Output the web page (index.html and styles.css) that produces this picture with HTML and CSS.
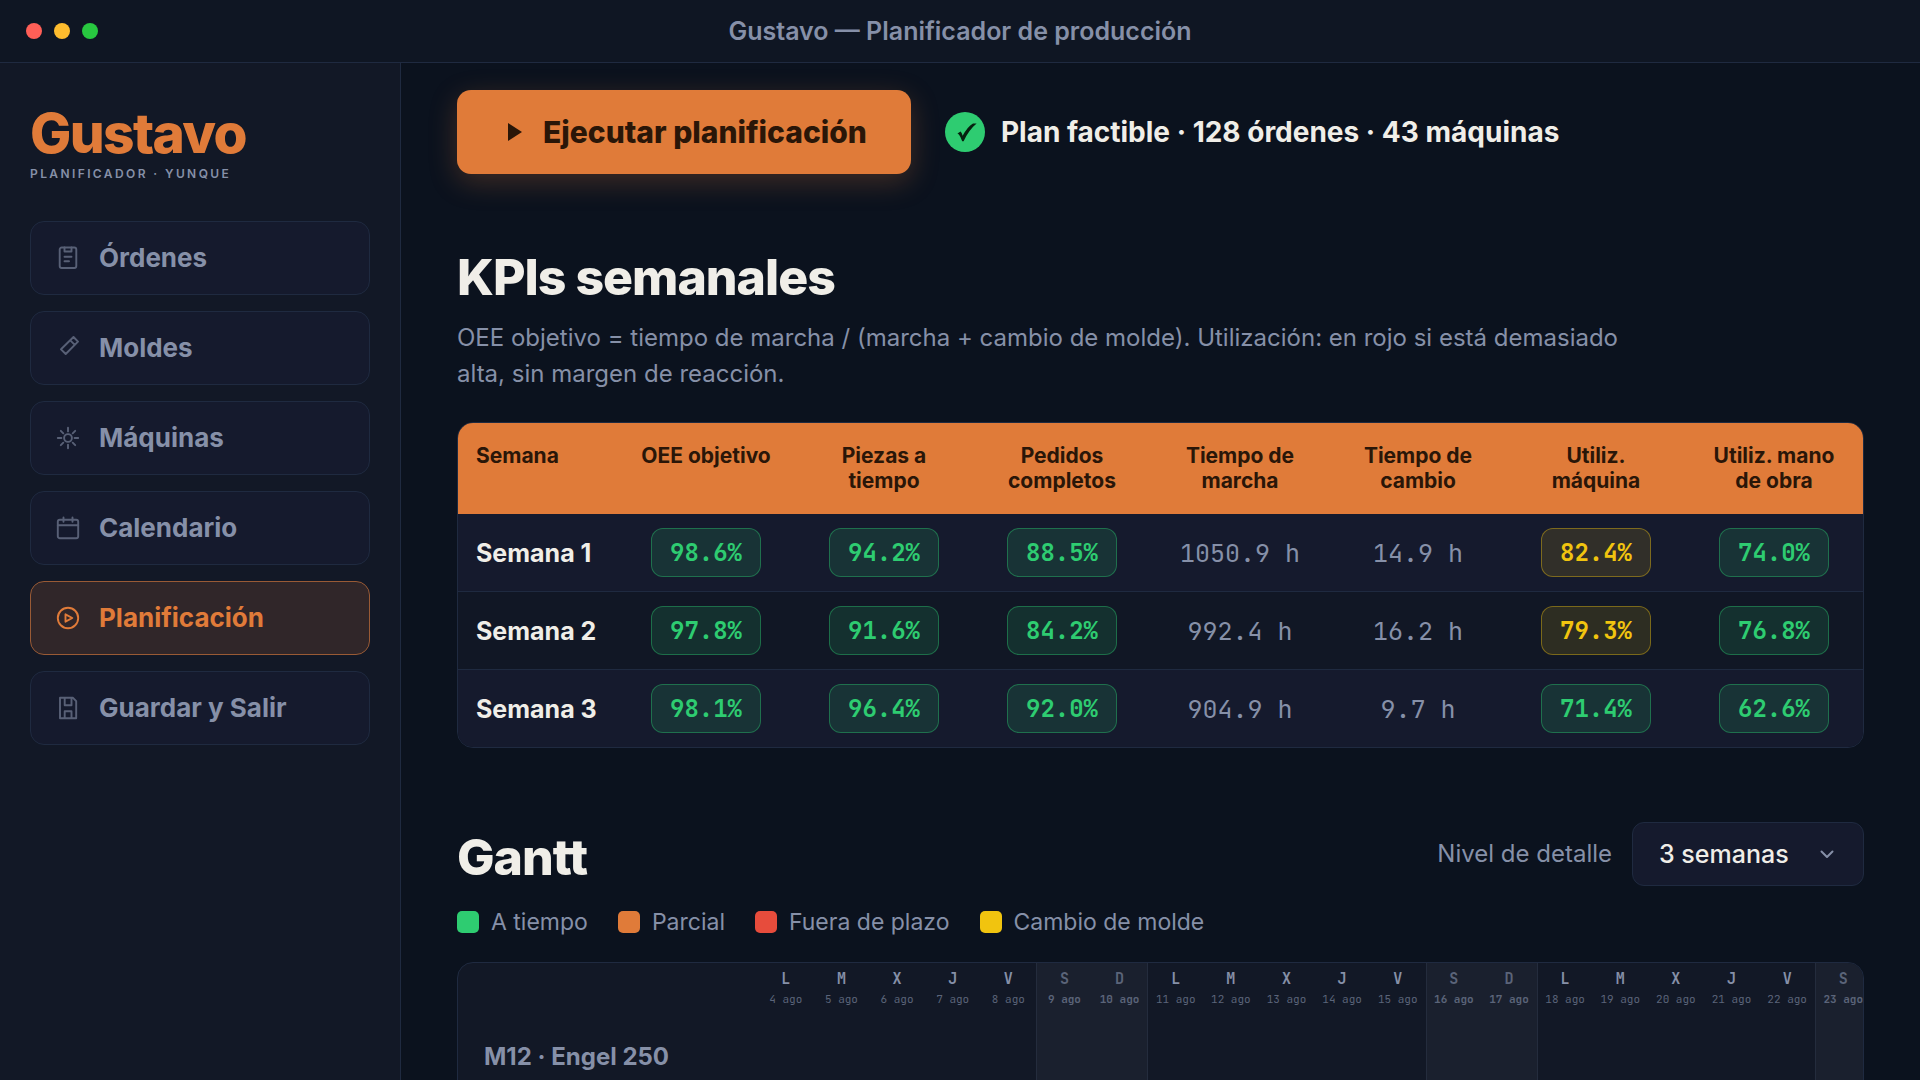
FILE: index.html
```html
<!DOCTYPE html>
<html lang="es">
<head>
  <meta charset="UTF-8">
  <meta name="viewport" content="width=device-width, initial-scale=1">
  <title>Gustavo — Planificador de producción</title>
  <link rel="stylesheet" href="styles.css">
</head>
<body>
  <header class="titlebar">
    <div class="dots">
      <span class="dot dot-close"></span>
      <span class="dot dot-min"></span>
      <span class="dot dot-max"></span>
    </div>
    <div class="window-title">Gustavo — Planificador de producción</div>
  </header>

  <div class="app">
    <aside class="sidebar">
      <div class="logo">Gustavo</div>
      <div class="tagline">PLANIFICADOR · YUNQUE</div>

      <nav class="menu">
        <a class="menu-item" href="#ordenes">
          <svg class="icon" viewBox="0 0 24 24"><rect x="3.7" y="1.5" width="16.6" height="20.5" rx="2"/><path d="M8.5 1.5v4h7v-4M8.5 10.8h7M8.5 15.3h4.5"/></svg>
          Órdenes
        </a>
        <a class="menu-item" href="#moldes">
          <svg class="icon" viewBox="0 0 24 24"><path d="M17.5 1 22 5.7 9.7 18 5 13.3zM14.3 4.3l4.5 4.5"/></svg>
          Moldes
        </a>
        <a class="menu-item" href="#maquinas">
          <svg class="icon" viewBox="0 0 24 24"><circle cx="12" cy="12" r="3.9"/><path d="M12 1.8v3.6M12 18.6v3.6M1.8 12h3.6M18.6 12h3.6M4.8 4.8l2.5 2.5M16.7 16.7l2.5 2.5M19.2 4.8l-2.5 2.5M7.3 16.7l-2.5 2.5"/></svg>
          Máquinas
        </a>
        <a class="menu-item" href="#calendario">
          <svg class="icon" viewBox="0 0 24 24"><rect x="1.8" y="3.7" width="20.4" height="18.5" rx="2"/><path d="M1.8 9.2h20.4M7.5 1.5v4.3M16.5 1.5v4.3"/></svg>
          Calendario
        </a>
        <a class="menu-item active" href="#planificacion">
          <svg class="icon" viewBox="0 0 24 24"><circle cx="12" cy="12" r="10.2"/><path d="M9.5 8.3v7.4l6.8-3.7z"/></svg>
          Planificación
        </a>
        <a class="menu-item" href="#guardar">
          <svg class="icon" viewBox="0 0 24 24"><path d="M4 1.8h13l3.2 3.4v17H4zM8.7 1.8v7.4h6.8V1.8M8.7 22v-6.8h6.8V22"/></svg>
          Guardar y Salir
        </a>
      </nav>
    </aside>

    <main class="content">
      <div class="run-bar">
        <button class="run-button" type="button">
          <svg class="play" viewBox="0 0 28 28"><path d="M7 5v18l14-9z"/></svg>
          Ejecutar planificación
        </button>
        <div class="status">
          <svg class="check" viewBox="0 0 40 40"><circle cx="20" cy="20" r="20"/><path d="M12.4 21.6 15.6 19.6Q17 21.2 17.6 23.8 22.4 14.6 28 11.4L31.6 11.4Q23.6 18 18.6 29.2L17.2 29.2Q15.4 24.4 14.2 23 13.4 22 12.4 21.6z"/></svg>
          Plan factible · 128 órdenes · 43 máquinas
        </div>
      </div>

      <section class="section">
        <h2>KPIs semanales</h2>
        <p class="description">OEE objetivo = tiempo de marcha / (marcha + cambio de molde). Utilización: en rojo si está demasiado alta, sin margen de reacción.</p>

        <div class="table-box">
          <table class="kpis">
            <thead>
              <tr>
                <th>Semana</th>
                <th>OEE objetivo</th>
                <th>Piezas a tiempo</th>
                <th>Pedidos completos</th>
                <th>Tiempo de marcha</th>
                <th>Tiempo de cambio</th>
                <th>Utiliz. máquina</th>
                <th>Utiliz. mano de obra</th>
              </tr>
            </thead>
            <tbody>
              <tr>
                <td>Semana 1</td>
                <td><span class="pill good">98.6%</span></td>
                <td><span class="pill good">94.2%</span></td>
                <td><span class="pill good">88.5%</span></td>
                <td class="hours">1050.9 h</td>
                <td class="hours">14.9 h</td>
                <td><span class="pill warn">82.4%</span></td>
                <td><span class="pill good">74.0%</span></td>
              </tr>
              <tr>
                <td>Semana 2</td>
                <td><span class="pill good">97.8%</span></td>
                <td><span class="pill good">91.6%</span></td>
                <td><span class="pill good">84.2%</span></td>
                <td class="hours">992.4 h</td>
                <td class="hours">16.2 h</td>
                <td><span class="pill warn">79.3%</span></td>
                <td><span class="pill good">76.8%</span></td>
              </tr>
              <tr>
                <td>Semana 3</td>
                <td><span class="pill good">98.1%</span></td>
                <td><span class="pill good">96.4%</span></td>
                <td><span class="pill good">92.0%</span></td>
                <td class="hours">904.9 h</td>
                <td class="hours">9.7 h</td>
                <td><span class="pill good">71.4%</span></td>
                <td><span class="pill good">62.6%</span></td>
              </tr>
            </tbody>
          </table>
        </div>
      </section>

      <section class="section">
        <div class="section-head">
          <h2>Gantt</h2>
          <div class="detail">
            <label for="detail">Nivel de detalle</label>
            <div class="select-box">
              <select id="detail">
                <option>3 semanas</option>
              </select>
              <svg class="chevron" viewBox="0 0 16 16"><path d="M2.5 5.5 8 11l5.5-5.5"/></svg>
            </div>
          </div>
        </div>

        <div class="legend">
          <span class="legend-item"><i class="swatch on-time"></i>A tiempo</span>
          <span class="legend-item"><i class="swatch partial"></i>Parcial</span>
          <span class="legend-item"><i class="swatch late"></i>Fuera de plazo</span>
          <span class="legend-item"><i class="swatch change"></i>Cambio de molde</span>
        </div>

        <div class="gantt">
          <div class="gantt-grid">
            <div class="machine">M12 · Engel 250</div>
            <div class="day"><b>L</b><span>4 ago</span></div>
            <div class="day"><b>M</b><span>5 ago</span></div>
            <div class="day"><b>X</b><span>6 ago</span></div>
            <div class="day"><b>J</b><span>7 ago</span></div>
            <div class="day"><b>V</b><span>8 ago</span></div>
            <div class="day weekend saturday"><b>S</b><span>9 ago</span></div>
            <div class="day weekend sunday"><b>D</b><span>10 ago</span></div>
            <div class="day"><b>L</b><span>11 ago</span></div>
            <div class="day"><b>M</b><span>12 ago</span></div>
            <div class="day"><b>X</b><span>13 ago</span></div>
            <div class="day"><b>J</b><span>14 ago</span></div>
            <div class="day"><b>V</b><span>15 ago</span></div>
            <div class="day weekend saturday"><b>S</b><span>16 ago</span></div>
            <div class="day weekend sunday"><b>D</b><span>17 ago</span></div>
            <div class="day"><b>L</b><span>18 ago</span></div>
            <div class="day"><b>M</b><span>19 ago</span></div>
            <div class="day"><b>X</b><span>20 ago</span></div>
            <div class="day"><b>J</b><span>21 ago</span></div>
            <div class="day"><b>V</b><span>22 ago</span></div>
            <div class="day weekend saturday"><b>S</b><span>23 ago</span></div>
          </div>
        </div>
      </section>
    </main>
  </div>
</body>
</html>
```
FILE: styles.css
```css
:root {
  --bg: #0b121e;
  --bar: #0f1623;
  --panel: #121826;
  --card: #151a2d;
  --line: #1f2a40;
  --text: #f0eee8;
  --muted: #8690a8;
  --orange: #e07b39;
  --green: #2ecc71;
  --yellow: #f1c40f;
  --red: #e74c3c;
  --dark: #2a1608;
  --mono: "JetBrains Mono", "DejaVu Sans Mono", monospace;
}

* {
  box-sizing: border-box;
}

body {
  margin: 0;
  height: 100vh;
  display: flex;
  flex-direction: column;
  overflow: hidden;
  background: var(--bg);
  color: var(--text);
  font-family: Inter, sans-serif;
  font-size: 24px;
  line-height: 36px;
}

/* Title bar */
.titlebar {
  display: grid;
  grid-template-columns: 1fr auto 1fr;
  align-items: center;
  flex: none;
  height: 63px;
  padding: 0 26px;
  background: var(--bar);
  border-bottom: 1px solid var(--line);
}

.dots {
  display: flex;
  gap: 12px;
}

.dot {
  width: 16px;
  height: 16px;
  border-radius: 50%;
}

.dot-close { background: #ff5f57; }
.dot-min { background: #febc2e; }
.dot-max { background: #28c840; }

.window-title {
  color: var(--muted);
  font-size: 25px;
  font-weight: 600;
}

.app {
  display: flex;
  flex: 1;
  min-height: 0;
}

/* Sidebar */
.sidebar {
  flex: none;
  width: 401px;
  padding: 40px 30px;
  background: var(--panel);
  border-right: 1px solid var(--line);
}

.logo {
  color: var(--orange);
  font-size: 55px;
  font-weight: 800;
  line-height: 60px;
  letter-spacing: -0.03em;
}

.tagline {
  margin-top: 2px;
  color: var(--muted);
  font-size: 12px;
  font-weight: 600;
  line-height: 18px;
  letter-spacing: 0.2em;
}

.menu {
  display: flex;
  flex-direction: column;
  gap: 16px;
  margin-top: 38px;
}

.menu-item {
  display: flex;
  align-items: center;
  gap: 19px;
  height: 74px;
  padding: 0 25px;
  border: 1px solid var(--line);
  border-radius: 14px;
  background: var(--card);
  color: var(--muted);
  font-size: 26px;
  font-weight: 700;
  text-decoration: none;
}

.menu-item.active {
  background: #302629;
  border-color: #995a35;
  color: var(--orange);
}

.icon {
  width: 24px;
  height: 24px;
  fill: none;
  stroke: currentColor;
  stroke-width: 1.9;
  stroke-linecap: round;
  stroke-linejoin: round;
  opacity: 0.6;
}

.active .icon {
  opacity: 1;
}

/* Content */
.content {
  flex: 1;
  min-width: 0;
  padding: 27px 56px 0;
  overflow: hidden;
}

.run-bar {
  display: flex;
  align-items: center;
  gap: 34px;
}

.run-button {
  display: flex;
  align-items: center;
  gap: 14px;
  height: 84px;
  padding: 0 44px;
  border: 0;
  border-radius: 14px;
  background: var(--orange);
  box-shadow: 0 8px 28px rgba(224, 123, 57, 0.25);
  color: var(--dark);
  font-family: inherit;
  font-size: 30px;
  font-weight: 800;
  cursor: pointer;
}

.play {
  width: 28px;
  height: 28px;
  fill: currentColor;
}

.status {
  display: flex;
  align-items: center;
  gap: 16px;
  font-size: 28px;
  font-weight: 700;
}

.check {
  width: 40px;
  height: 40px;
  fill: #06210f;
}

.check circle {
  fill: var(--green);
}

.section {
  margin-top: 74px;
}

h2 {
  margin: 0;
  font-size: 50px;
  font-weight: 800;
  line-height: 58px;
  letter-spacing: -0.02em;
}

.description {
  max-width: 1200px;
  margin: 14px 0 30px;
  color: var(--muted);
}

/* KPI table */
.table-box {
  border: 1px solid var(--line);
  border-radius: 16px;
  overflow: hidden;
}

.kpis {
  width: 100%;
  table-layout: fixed;
  border-collapse: separate;
  border-spacing: 0;
  text-align: center;
}

.kpis th {
  padding: 20px 16px 21px;
  background: var(--orange);
  color: var(--dark);
  font-size: 21px;
  font-weight: 700;
  line-height: 25px;
  vertical-align: top;
}

.kpis td {
  height: 78px;
  padding: 0;
  border-bottom: 1px solid var(--line);
  background: var(--card);
}

.kpis tr:nth-child(even) td {
  background: #111725;
}

.kpis tr:last-child td {
  height: 77px;
  border-bottom: 0;
}

.kpis th:first-child,
.kpis td:first-child {
  width: 159px;
  padding-left: 18px;
  padding-right: 0;
  text-align: left;
}

.kpis td:first-child {
  font-size: 25px;
  font-weight: 700;
}

.kpis .hours {
  color: var(--muted);
  font-family: var(--mono);
  font-size: 25px;
}

.pill {
  display: inline-block;
  padding: 6px 18px 5px;
  border: 1px solid;
  border-radius: 12px;
  font-family: var(--mono);
  font-weight: 700;
  vertical-align: middle;
}

.good {
  border-color: rgba(46, 204, 113, 0.4);
  background: rgba(46, 204, 113, 0.14);
  color: var(--green);
}

.warn {
  border-color: rgba(241, 196, 15, 0.4);
  background: rgba(241, 196, 15, 0.13);
  color: var(--yellow);
}

/* Gantt */
.section-head {
  display: flex;
  align-items: flex-end;
  justify-content: space-between;
}

.detail {
  display: flex;
  align-items: center;
  gap: 20px;
  color: var(--muted);
}

.select-box {
  position: relative;
}

.select-box select {
  display: block;
  height: 64px;
  padding: 0 74px 0 26px;
  appearance: none;
  border: 1px solid var(--line);
  border-radius: 12px;
  background: var(--card);
  color: var(--text);
  font-family: inherit;
  font-size: 25px;
  font-weight: 500;
}

.chevron {
  position: absolute;
  top: 24px;
  right: 29px;
  width: 16px;
  height: 16px;
  fill: none;
  stroke: var(--muted);
  stroke-width: 2;
  stroke-linecap: round;
  stroke-linejoin: round;
  pointer-events: none;
}

.legend {
  display: flex;
  gap: 30px;
  margin: 18px 0 22px;
  color: var(--muted);
  font-size: 23px;
}

.legend-item {
  display: flex;
  align-items: center;
  gap: 12px;
}

.swatch {
  width: 22px;
  height: 22px;
  border-radius: 5px;
}

.on-time { background: var(--green); }
.partial { background: var(--orange); }
.late { background: var(--red); }
.change { background: var(--yellow); }

.gantt {
  border: 1px solid var(--line);
  border-radius: 16px;
  background: var(--panel);
  overflow: hidden;
}

/* Three weeks run a little past the visible box */
.gantt-grid {
  display: grid;
  grid-template-columns: 300px repeat(21, minmax(0, 1fr));
  width: 104.5%;
  min-height: 320px;
}

.machine {
  padding: 76px 0 0 26px;
  color: var(--muted);
  font-weight: 700;
}

.day {
  display: flex;
  flex-direction: column;
  align-items: center;
  gap: 2px;
  padding-top: 6px;
  color: var(--muted);
  font-family: var(--mono);
  white-space: nowrap;
}

.day b {
  font-size: 15px;
  font-weight: 600;
  line-height: 20px;
}

.day span {
  color: #5b6479;
  font-size: 11px;
  line-height: 16px;
}

.weekend {
  background: #1a202e;
  color: #5b6479;
}

.weekend b,
.weekend span {
  font-weight: 700;
}

.saturday,
.sunday + .day {
  border-left: 1px solid #242c3d;
}
```
